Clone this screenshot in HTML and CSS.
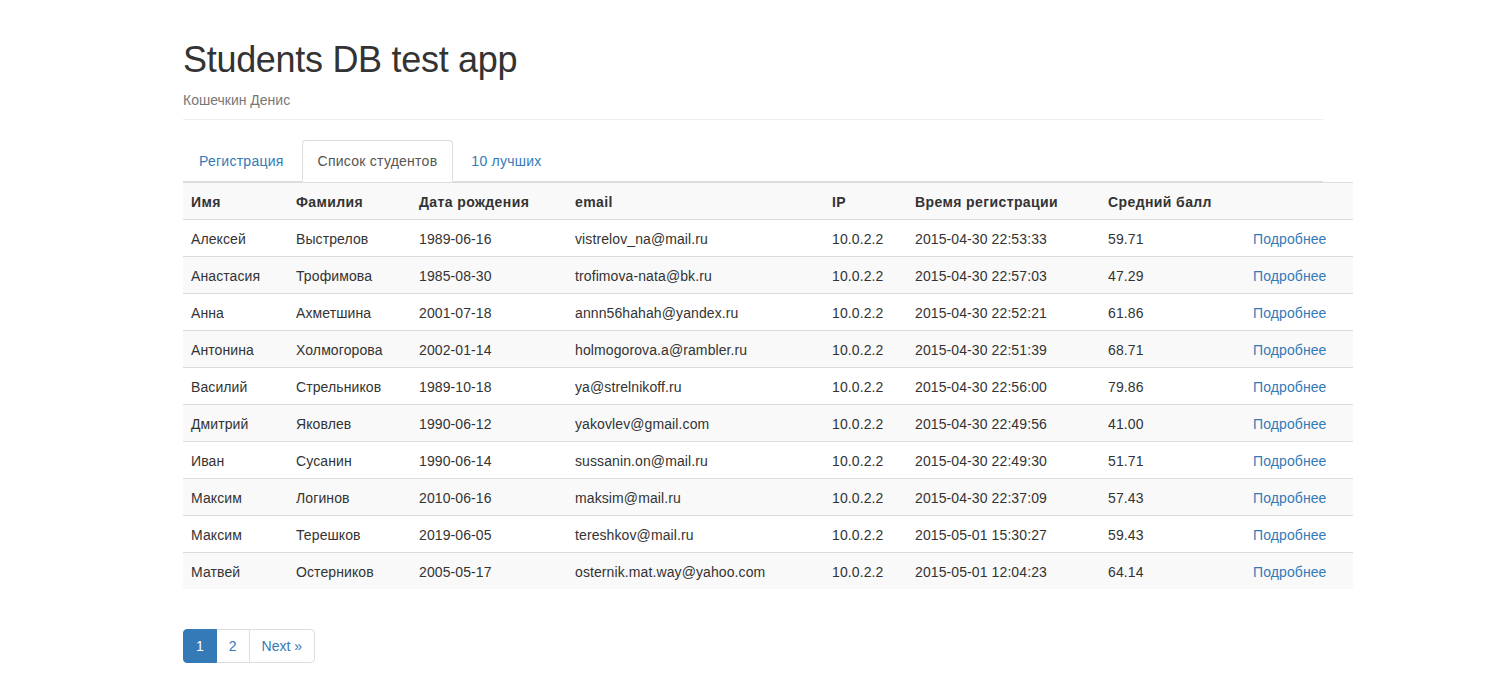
FILE: index.html
```html
<!DOCTYPE html>
<html lang="ru">
<head>
<meta charset="utf-8">
<title>Students DB test app</title>
<link rel="stylesheet" href="styles.css">
</head>
<body>
<div class="container">
  <div class="page-header">
    <h1>Students DB test app</h1>
    <p class="subtitle">Кошечкин Денис</p>
  </div>
  <ul class="nav-tabs">
    <li><a href="#">Регистрация</a></li>
    <li class="active"><a href="#">Список студентов</a></li>
    <li><a href="#">10 лучших</a></li>
  </ul>
  <table class="table">
    <colgroup>
      <col class="c1"><col class="c2"><col class="c3"><col class="c4"><col class="c5"><col class="c6"><col class="c7"><col class="c8">
    </colgroup>
    <tbody>
      <tr><th>Имя</th><th>Фамилия</th><th>Дата рождения</th><th>email</th><th>IP</th><th>Время регистрации</th><th>Средний балл</th><th></th></tr>
      <tr><td>Алексей</td><td>Выстрелов</td><td>1989-06-16</td><td>vistrelov_na@mail.ru</td><td>10.0.2.2</td><td>2015-04-30 22:53:33</td><td>59.71</td><td><a href="#">Подробнее</a></td></tr>
      <tr><td>Анастасия</td><td>Трофимова</td><td>1985-08-30</td><td>trofimova-nata@bk.ru</td><td>10.0.2.2</td><td>2015-04-30 22:57:03</td><td>47.29</td><td><a href="#">Подробнее</a></td></tr>
      <tr><td>Анна</td><td>Ахметшина</td><td>2001-07-18</td><td>annn56hahah@yandex.ru</td><td>10.0.2.2</td><td>2015-04-30 22:52:21</td><td>61.86</td><td><a href="#">Подробнее</a></td></tr>
      <tr><td>Антонина</td><td>Холмогорова</td><td>2002-01-14</td><td>holmogorova.a@rambler.ru</td><td>10.0.2.2</td><td>2015-04-30 22:51:39</td><td>68.71</td><td><a href="#">Подробнее</a></td></tr>
      <tr><td>Василий</td><td>Стрельников</td><td>1989-10-18</td><td>ya@strelnikoff.ru</td><td>10.0.2.2</td><td>2015-04-30 22:56:00</td><td>79.86</td><td><a href="#">Подробнее</a></td></tr>
      <tr><td>Дмитрий</td><td>Яковлев</td><td>1990-06-12</td><td>yakovlev@gmail.com</td><td>10.0.2.2</td><td>2015-04-30 22:49:56</td><td>41.00</td><td><a href="#">Подробнее</a></td></tr>
      <tr><td>Иван</td><td>Сусанин</td><td>1990-06-14</td><td>sussanin.on@mail.ru</td><td>10.0.2.2</td><td>2015-04-30 22:49:30</td><td>51.71</td><td><a href="#">Подробнее</a></td></tr>
      <tr><td>Максим</td><td>Логинов</td><td>2010-06-16</td><td>maksim@mail.ru</td><td>10.0.2.2</td><td>2015-04-30 22:37:09</td><td>57.43</td><td><a href="#">Подробнее</a></td></tr>
      <tr><td>Максим</td><td>Терешков</td><td>2019-06-05</td><td>tereshkov@mail.ru</td><td>10.0.2.2</td><td>2015-05-01 15:30:27</td><td>59.43</td><td><a href="#">Подробнее</a></td></tr>
      <tr><td>Матвей</td><td>Остерников</td><td>2005-05-17</td><td>osternik.mat.way@yahoo.com</td><td>10.0.2.2</td><td>2015-05-01 12:04:23</td><td>64.14</td><td><a href="#">Подробнее</a></td></tr>
    </tbody>
  </table>
  <ul class="pagination">
    <li class="active"><a href="#">1</a></li>
    <li><a href="#">2</a></li>
    <li><a href="#">Next »</a></li>
  </ul>
</div>
</body>
</html>
```
FILE: styles.css
```css
* { box-sizing: border-box; }
html, body { margin: 0; padding: 0; }
body {
  font-family: "Liberation Sans", Arial, sans-serif;
  font-size: 14px;
  line-height: 20px;
  color: #333;
  background: #fff;
}
a { color: #337ab7; text-decoration: none; }
.container {
  width: 1170px;
  margin: 0 auto;
  padding: 0 15px;
}
.page-header {
  margin: 40px 0 20px;
  padding-bottom: 9px;
  border-bottom: 1px solid #eee;
}
.page-header h1 {
  margin: 0 0 10px;
  font-size: 36px;
  font-weight: 500;
  line-height: 1.1;
  letter-spacing: -0.3px;
  color: #333;
}
.subtitle {
  margin: 0;
  color: #777;
}
.nav-tabs {
  list-style: none;
  margin: 0;
  padding: 0;
  display: flex;
  border-bottom: 1px solid #ddd;
}
.nav-tabs li {
  margin-bottom: -1px;
}
.nav-tabs a {
  display: block;
  padding: 10px 15px;
  margin-right: 2px;
  line-height: 20px;
  letter-spacing: 0.25px;
  border: 1px solid transparent;
  border-radius: 4px 4px 0 0;
}
.nav-tabs .active a {
  color: #555;
  background: #fff;
  border-color: #ddd #ddd transparent;
}
.table {
  width: 1170px;
  table-layout: fixed;
  border-collapse: collapse;
  border-spacing: 0;
  margin-bottom: 20px;
}
.c1 { width: 105px; }
.c2 { width: 123px; }
.c3 { width: 156px; }
.c4 { width: 257px; }
.c5 { width: 83px; }
.c6 { width: 193px; }
.c7 { width: 145px; }
.c8 { width: 108px; }
.table th, .table td {
  padding: 9px 8px 7px;
  line-height: 20px;
  text-align: left;
  vertical-align: top;
  border-top: 1px solid #ddd;
  white-space: nowrap;
}
.table td { letter-spacing: 0.1px; }
.table th { font-weight: bold; letter-spacing: 0.4px; }
.table tr:nth-child(odd) { background: #f9f9f9; }
.pagination {
  list-style: none;
  display: flex;
  margin: 40px 0 20px;
  padding: 0;
}
.pagination li + li a { margin-left: -1px; }
.pagination a {
  display: block;
  padding: 6px 12px;
  line-height: 20px;
  border: 1px solid #ddd;
  background: #fff;
  color: #337ab7;
}
.pagination li:first-child a { border-radius: 4px 0 0 4px; }
.pagination li:last-child a { border-radius: 0 4px 4px 0; }
.pagination .active a {
  background: #337ab7;
  border-color: #337ab7;
  color: #fff;
  position: relative;
}
```
